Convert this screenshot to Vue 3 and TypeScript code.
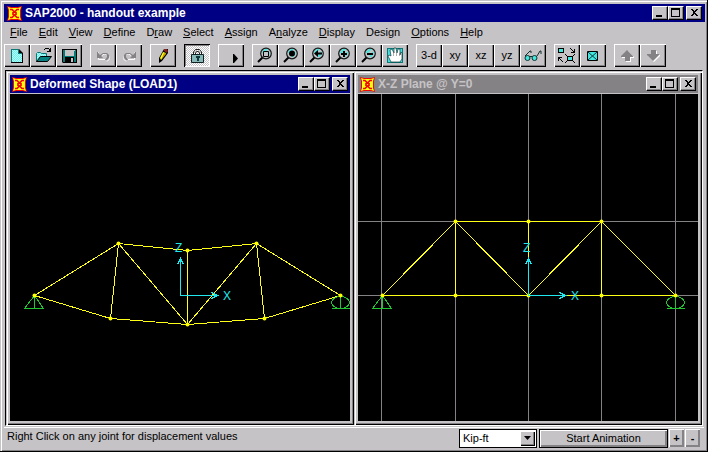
<script setup lang="ts">
import { ref } from 'vue'

interface MenuEntry { before: string; key: string; after: string }
interface Tool { id: string; title: string; text?: string; locked?: boolean; disabled?: boolean }
type Point = [number, number]
interface View {
  title: string
  active: boolean
  gridX: number[]
  gridY: number[]
  nodes: Point[]
  members: [number, number][]
  origin: Point
  labelZ: Point
  labelX: Point
}

const entry = (before: string, key: string, after: string): MenuEntry => ({ before, key, after })

const menus: MenuEntry[] = [
  entry('', 'F', 'ile'), entry('', 'E', 'dit'), entry('', 'V', 'iew'), entry('', 'D', 'efine'),
  entry('D', 'r', 'aw'), entry('', 'S', 'elect'), entry('', 'A', 'ssign'), entry('A', 'n', 'alyze'),
  entry('', 'D', 'isplay'), entry('Desi', 'g', 'n'), entry('', 'O', 'ptions'), entry('', 'H', 'elp'),
]

const groups: Tool[][] = [
  [{ id: 'new', title: 'New' }, { id: 'open', title: 'Open' }, { id: 'save', title: 'Save' }],
  [{ id: 'undo', title: 'Undo', disabled: true }, { id: 'redo', title: 'Redo', disabled: true }],
  [{ id: 'pencil', title: 'Edit' }],
  [{ id: 'lock', title: 'Lock model', locked: true }],
  [{ id: 'run', title: 'Run' }],
  [
    { id: 'zoom-box', title: 'Zoom window' }, { id: 'zoom-full', title: 'Zoom full' },
    { id: 'zoom-back', title: 'Zoom previous' }, { id: 'zoom-in', title: 'Zoom in' },
    { id: 'zoom-out', title: 'Zoom out' }, { id: 'pan', title: 'Pan' },
  ],
  [
    { id: 'v3d', title: '3-d view', text: '3-d' }, { id: 'vxy', title: 'xy view', text: 'xy' },
    { id: 'vxz', title: 'xz view', text: 'xz' }, { id: 'vyz', title: 'yz view', text: 'yz' },
    { id: 'glasses', title: 'Perspective' },
  ],
  [{ id: 'shrink', title: 'Shrink elements' }, { id: 'elements', title: 'Set elements' }],
  [{ id: 'up', title: 'Up', disabled: true }, { id: 'down', title: 'Down', disabled: true }],
]

const members: [number, number][] = [
  [0, 1], [1, 2], [2, 3], [3, 4], [0, 5], [5, 6], [6, 7], [7, 4], [1, 5], [3, 7], [1, 6], [3, 6], [2, 6],
]

const views: View[] = [
  {
    title: 'Deformed Shape (LOAD1)',
    active: true,
    gridX: [],
    gridY: [],
    nodes: [[24, 201], [108, 149], [177, 156], [246, 149], [330, 201], [100, 224], [177, 230], [254, 224]],
    members,
    origin: [170, 201],
    labelZ: [165, 158],
    labelX: [213, 206],
  },
  {
    title: 'X-Z Plane @ Y=0',
    active: false,
    gridX: [23, 97, 170, 243, 317],
    gridY: [127, 201],
    nodes: [[24, 201], [97, 127], [170, 127], [243, 127], [317, 201], [97, 201], [170, 201], [243, 201]],
    members,
    origin: [170, 201],
    labelZ: [165, 158],
    labelX: [213, 206],
  },
]

const units = ref('Kip-ft')
const locked = ref(true)
const caption = ['Minimize', 'Maximize', 'Close']
</script>

<template>
  <main class="app">
    <header class="title-bar active">
      <svg class="logo" viewBox="0 0 15 15" aria-hidden="true"><use href="#logo" /></svg>
      <h1>SAP2000 - handout example</h1>
      <div class="captions">
        <button v-for="(c, i) in caption" :key="c" type="button" :aria-label="c">
          <svg viewBox="0 0 12 10" aria-hidden="true"><use :href="'#cap' + i" /></svg>
        </button>
      </div>
    </header>

    <nav class="menu" aria-label="Main menu">
      <button v-for="m in menus" :key="m.before + m.key + m.after" type="button">{{ m.before }}<u>{{ m.key }}</u>{{ m.after }}</button>
    </nav>

    <div class="toolbar" role="toolbar" aria-label="Tools">
      <div v-for="(g, gi) in groups" :key="gi" class="group">
        <button
          v-for="t in g" :key="t.id" type="button" class="tool"
          :class="{ pressed: t.locked && locked }" :aria-label="t.title" :disabled="t.disabled"
          @click="t.locked && (locked = !locked)"
        >
          <template v-if="t.text">{{ t.text }}</template>
          <svg v-else viewBox="0 0 26 23" aria-hidden="true">
            <g v-if="t.id === 'new'">
              <path d="M7 5h8l4 4v10H7z" fill="#000" />
              <path d="M8 6h6v4h4v8H8z" fill="url(#dither)" />
              <path d="M7 5h8v1H8v12H7zM14 6h1v3h3v1h-4z" fill="#087878" />
            </g>
            <g v-else-if="t.id === 'open'">
              <path d="M6.500 17.500V9.500l1-1h3l1 1h5v3" fill="url(#dither)" stroke="#087878" />
              <path d="M6.500 17.500l4-5h11l-4 5z" fill="#078080" stroke="#000" />
              <path d="M13.500 6.500l2-2h3l2 3M20.500 4v4M17 7.500h4" fill="none" stroke="#000" shape-rendering="crispEdges" />
            </g>
            <g v-else-if="t.id === 'save'">
              <path d="M6 5h15v14H7l-1-1z" fill="#000" />
              <path d="M7 6h13v12H7z" fill="#057878" />
              <path d="M9 6h9v6H9z" fill="#c6c3c6" />
              <path d="M9 13h9v5H9z" fill="#000" />
              <path d="M15 14h2v4h-2zM18 6h1v1h-1z" fill="#c6c3c6" />
            </g>
            <g v-else-if="t.id === 'undo' || t.id === 'redo'" :transform="t.id === 'redo' ? 'translate(27 0) scale(-1 1)' : undefined">
              <path d="M8.500 8v7.500H15M12 11.500l2-1.500h2l3 2.500v3l-2 2" fill="none" stroke="#fff" />
              <path d="M7 8h1l1 2 1 1 3-2h4l2 2v3l-2 2h-2l2-3v-2l-1-1h-3l-2 2 2 2H7z" fill="#848284" />
            </g>
            <g v-else-if="t.id === 'pencil'">
              <path d="M14 5h4v4l-6 8-3 2v-5z" fill="#000" />
              <path d="M13 8l3 1-5 7-1-2z" fill="#ffff18" />
              <path d="M14 9l2 1-5 6z" fill="#c69a00" />
              <path d="M14 5h3l1 2-1 2-3-2z" fill="#842020" />
            </g>
            <g v-else-if="t.id === 'lock'">
              <path d="M9.500 11V8l2-2.500h4l2 2.500v3M11.500 11V9l1-1.500h2l1 1.500v2" fill="none" stroke="#222" />
              <path d="M7.500 10.500h12v8h-12z" fill="#89b8b8" stroke="#102020" />
              <path d="M12 12h4v2h-1v3h-2v-3h-1z" fill="#103838" />
            </g>
            <path v-else-if="t.id === 'run'" d="M15 10h1l4 4.500-4 4.500h-1z" fill="#000" />
            <g v-else-if="t.id.startsWith('zoom')">
              <path d="M6 18l5-5" stroke="#000" stroke-width="2" />
              <circle cx="14" cy="9.500" r="5.300" fill="#c6c3c6" stroke="#101818" stroke-width="1.200" />
              <path d="M10 8l3-3h3l-5 5zM17 7l1 3-3 3h-2z" fill="#42e7df" />
              <path v-if="t.id === 'zoom-box'" d="M11.500 7.500h5v5h-5z" fill="#c6c3c6" stroke="#000" />
              <circle v-else-if="t.id === 'zoom-full'" cx="14" cy="9.500" r="3" />
              <path v-else-if="t.id === 'zoom-back'" d="M10 9.500l4-3.500v2.500h4v2h-4V13z" />
              <path v-else-if="t.id === 'zoom-in'" d="M11 9h2V7h2v2h2v2h-2v2h-2v-2h-2z" />
              <path v-else d="M11 9h6v2h-6z" />
            </g>
            <g v-else-if="t.id === 'pan'">
              <path d="M5 4h16v15H5z" fill="#087878" />
              <path d="M6 5h14v13H6z" fill="#42dfdf" />
              <path d="M9 18l-3-6 1-1 2 1-1-6 2-1 2 4V4h2l1 5 1-4h2v6l1-3 1 1v6l-2 3z" fill="#fff" stroke="#103838" stroke-width=".7" />
              <path d="M11.500 8v4M14.500 8v4M17.500 9v3" stroke="#777" stroke-width=".6" fill="none" />
            </g>
            <g v-else-if="t.id === 'glasses'" fill="none" stroke="#103030">
              <circle cx="7.500" cy="14" r="2.500" fill="#42e7df" /><circle cx="14.500" cy="14" r="2.500" fill="#42e7df" />
              <path d="M5 12l5-5h1v2M10 12.500h2M17 12l3-5h1v3" />
            </g>
            <g v-else-if="t.id === 'shrink'" fill="none" stroke="#000" shape-rendering="crispEdges">
              <path d="M4.500 4.500h5v4h-5zM13.500 12.500h5v4h-5z" fill="#42e7df" />
              <path d="M16 4l4 4M20.500 5v4M17 8.500h4M9 18l-4-4M4.500 17v-4M5 13.500h3M11 10l2 2M19 12l2-2M11 19l2-2M19 17l2 2" />
            </g>
            <g v-else-if="t.id === 'elements'">
              <path d="M7.500 7.500h10v9h-10z" fill="#42e7df" stroke="#000" />
              <path d="M8 8l9 8M17 8l-9 8" stroke="#103838" />
            </g>
            <g v-else :transform="t.id === 'down' ? 'translate(0 23) scale(1 -1)' : undefined">
              <path d="M14 7l6 6v1h-3v4h-5v-4H8v-1z" fill="#fff" :transform="t.id === 'down' ? 'translate(0 -2)' : undefined" />
              <path d="M13 6l6 6v1h-3v4h-5v-4H7v-1z" fill="#848284" />
            </g>
          </svg>
        </button>
      </div>
    </div>

    <div class="workspace">
      <section v-for="v in views" :key="v.title" class="child">
        <header class="title-bar" :class="{ active: v.active }">
          <svg class="logo" viewBox="0 0 15 15" aria-hidden="true"><use href="#logo" /></svg>
          <h2>{{ v.title }}</h2>
          <div class="captions">
            <button v-for="(c, i) in caption" :key="c" type="button" :aria-label="c">
              <svg viewBox="0 0 12 10" aria-hidden="true"><use :href="'#cap' + i" /></svg>
            </button>
          </div>
        </header>
        <div class="canvas">
          <svg viewBox="0 0 340 327" fill="none" role="img" :aria-label="v.title">
            <g transform="translate(.5 .5)" shape-rendering="crispEdges">
              <g stroke="#848284">
                <path v-for="x in v.gridX" :key="'x' + x" :d="`M${x} -1V327`" />
                <path v-for="y in v.gridY" :key="'y' + y" :d="`M-1 ${y}H340`" />
              </g>
              <path
                v-for="([a, b], i) in v.members" :key="i" stroke="#ffff18"
                :d="`M${v.nodes[a][0]} ${v.nodes[a][1]}L${v.nodes[b][0]} ${v.nodes[b][1]}`"
              />
              <g stroke="#21c731">
                <path :d="`M${v.nodes[0][0]} ${v.nodes[0][1]}l-10 13h19l-9-13v13`" />
                <path :d="`M${v.nodes[4][0]} ${v.nodes[4][1]}v13m-9 0h18`" />
                <ellipse :cx="v.nodes[4][0]" :cy="v.nodes[4][1] + 7" rx="9" ry="6" />
              </g>
            </g>
            <circle v-for="(n, i) in v.nodes" :key="'n' + i" :cx="n[0] + .5" :cy="n[1] + .5" r="2" fill="#ffff00" />
            <g stroke="#21e7ef" transform="translate(.5 .5)" shape-rendering="crispEdges">
              <path :d="`M${v.origin[0]} ${v.origin[1] - 37}v37h37m-6 -3l6 3l-6 3M${v.origin[0] - 3} ${v.origin[1] - 31}l3-6l3 6`" />
            </g>
            <text class="axis" :x="v.labelZ[0]" :y="v.labelZ[1]">Z</text>
            <text class="axis" :x="v.labelX[0]" :y="v.labelX[1]">X</text>
          </svg>
        </div>
      </section>
    </div>

    <footer class="status">
      <p>Right Click on any joint for displacement values</p>
      <div class="combo">
        <select v-model="units" aria-label="Units">
          <option>Kip-ft</option>
          <option>Kip-in</option>
        </select>
        <span class="arrow" aria-hidden="true"><svg viewBox="0 0 7 4"><path d="M0 0h7L3.500 4z" /></svg></span>
      </div>
      <button type="button" class="animate">Start Animation</button>
      <button type="button" class="step">+</button>
      <button type="button" class="step">-</button>
    </footer>

    <svg class="defs" aria-hidden="true">
      <defs>
        <pattern id="dither" width="2" height="2" patternUnits="userSpaceOnUse">
          <path d="M0 0h2v2H0z" fill="#6cf0ec" /><path d="M0 0h1v1H0zM1 1h1v1H1z" fill="#b4fcf8" />
        </pattern>
        <symbol id="logo" viewBox="0 0 15 15">
          <path d="M0 0l4 1h7l4-1-1 4v7l1 4-4-1H4l-4 1 1-4V4z" fill="#f00808" />
          <path d="M1 1l3 1h7l3-1-1 3v7l1 3-3-1H4l-3 1 1-3V4z" fill="#ffff10" />
          <path d="M3 3.500h2L7.500 6l2.500-2.500h2M3 11.500h2L7.500 9l2.500 2.500h2M6 6v3M9 6v3" fill="none" stroke="#f00808" stroke-width="1.700" />
        </symbol>
        <symbol id="cap0" viewBox="0 0 12 10"><path d="M2 7h6v2H2z" /></symbol>
        <symbol id="cap1" viewBox="0 0 12 10"><path d="M1 0h9v9H1zM2 2v6h7V2z" fill-rule="evenodd" /></symbol>
        <symbol id="cap2" viewBox="0 0 12 10"><path d="M2 1h2l2 2 2-2h2L7 4v1l3 3H8L6 6 4 8H2l3-3V4z" shape-rendering="crispEdges" /></symbol>
      </defs>
    </svg>
  </main>
</template>

<style>
body { margin: 0; background: #c6c3c6; }
</style>

<style scoped>
* { box-sizing: border-box; }
.app {
  display: grid;
  grid-template-rows: auto auto auto 1fr auto;
  grid-template-columns: minmax(0, 1fr);
  height: 100vh;
  padding: 3px 2px 3px 3px;
  border: 1px solid #000;
  border-width: 0 1px 1px 0;
  background: #c6c3c6;
  box-shadow: inset 1px 1px #c6c3c6, inset 2px 2px #fff, inset -1px -1px #848284;
  color: #000;
  font: 11px/13px "Liberation Sans", Arial, sans-serif;
}
button, select { font: inherit; color: inherit; }
button {
  display: flex;
  align-items: center;
  justify-content: center;
  margin: 0;
  padding: 0;
  border: 0;
  border-radius: 0;
  background: #c6c3c6;
}
h1, h2, p { margin: 0; }
h1, h2 { flex: 1; font-size: 12px; line-height: 16px; font-weight: bold; white-space: nowrap; }

.title-bar {
  display: flex;
  align-items: center;
  gap: 3px;
  height: 18px;
  padding: 0 2px;
  background: #848284;
  color: #c6c3c6;
}
.title-bar.active { background: #000084; color: #fff; }
.app > .title-bar { margin: 1px 0 0 1px; padding: 0 3px; }
.logo { width: 15px; height: 15px; }
.captions { display: flex; }
.captions button {
  width: 16px;
  height: 14px;
  border: 1px solid;
  border-color: #fff #000 #000 #fff;
  box-shadow: inset -1px -1px #848284;
  color: #000;
}
.captions button:last-child { margin-left: 2px; }
.captions svg { width: 12px; height: 10px; }

.menu { display: flex; gap: 1px; padding: 1px 2px 0; }
.menu button { height: 19px; padding: 0 5px; background: none; white-space: nowrap; }

.toolbar { display: flex; gap: 8px; padding: 2px 1px 3px; }
.group { display: flex; }
.tool {
  width: 26px;
  height: 23px;
  box-shadow: inset 1px 1px #fff, inset -1px -1px #000, inset -2px -2px #848284;
}
.tool:disabled { color: inherit; }
.tool svg { width: 26px; height: 23px; }
.tool.pressed {
  background: repeating-conic-gradient(#fff 0 25%, #c6c3c6 0 50%) 0 0 / 2px 2px;
  box-shadow: inset 1px 1px #000, inset -1px -1px #fff, inset 2px 2px #848284;
}

.workspace {
  display: grid;
  grid-template-columns: repeat(2, minmax(0, 1fr));
  min-height: 0;
  margin: 0 2px;
  border: 1px solid;
  border-color: #000 #fff #fff #000;
  background: #848284;
}
.child {
  display: flex;
  flex-direction: column;
  min-width: 0;
  min-height: 0;
  padding: 4px;
  background: #c6c3c6;
  box-shadow: inset 1px 1px #c6c3c6, inset 2px 2px #fff, inset -1px -1px #000, inset -2px -2px #848284;
}
.canvas { flex: 1; min-height: 0; margin-top: 1px; background: #000; }
.canvas svg { display: block; width: 100%; height: 100%; }
.axis { fill: #21e7ef; font: 12px "Liberation Sans Narrow", "Liberation Sans", Arial, sans-serif; }

.status {
  display: flex;
  align-items: center;
  gap: 1px;
  height: 21px;
  margin: 1px 1px 0;
  padding: 1px 4px 1px 3px;
  border-top: 1px solid #fff;
}
.status p { flex: 1; min-width: 0; padding-bottom: 4px; white-space: nowrap; }
.combo {
  display: flex;
  width: 78px;
  height: 19px;
  margin-right: 1px;
  padding: 1px;
  border: 1px solid #000;
  background: #fff;
}
.combo select {
  flex: 1;
  min-width: 0;
  padding: 0 2px;
  border: 0;
  appearance: none;
  background: #fff;
}
.arrow {
  display: flex;
  align-items: center;
  justify-content: center;
  width: 15px;
  background: #c6c3c6;
  box-shadow: inset 1px 1px #fff, inset -1px -1px #000, inset -2px -2px #848284;
}
.arrow svg { width: 7px; height: 4px; }
.animate {
  width: 129px;
  height: 19px;
  border: 1px solid #000;
  box-shadow: inset 1px 1px #fff, inset -2px -2px #848284;
}
.step {
  width: 15px;
  height: 18px;
  font-weight: bold;
  box-shadow: inset 1px 1px #fff, inset -2px -2px #848284;
}
.defs { position: absolute; width: 0; height: 0; }
</style>
